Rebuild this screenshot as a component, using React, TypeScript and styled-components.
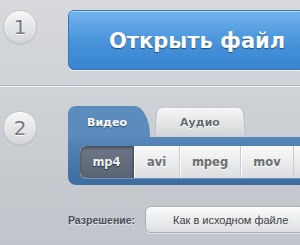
import React, { useState } from "react";
import styled, { createGlobalStyle, css } from "styled-components";

const GlobalStyle = createGlobalStyle`
  html, body {
    margin: 0;
    padding: 0;
  }
  body {
    width: 300px;
    height: 245px;
    overflow: hidden;
    background: linear-gradient(#d7d9dc, #c0c5cb);
    font-family: "DejaVu Sans", Verdana, sans-serif;
  }
`;

const Page = styled.div`
  display: flex;
  flex-direction: column;
`;

const Step = styled.section<{ $top: number; $height?: number }>`
  display: flex;
  align-items: flex-start;
  padding-top: ${(p) => p.$top}px;
  ${(p) =>
    p.$height &&
    css`
      height: ${p.$height}px;
      box-sizing: border-box;
    `}
`;

const Separator = styled.hr`
  margin: 0;
  border: none;
  height: 1px;
  background: #b6babe;
  border-bottom: 1px solid #eef0f1;
`;

const NumberColumn = styled.div<{ $offset: number }>`
  width: 68px;
  flex-shrink: 0;
  padding-top: ${(p) => p.$offset}px;
  padding-left: 3px;
  box-sizing: border-box;
`;

const Circle = styled.div`
  width: 34px;
  height: 34px;
  border-radius: 50%;
  box-sizing: border-box;
  border: 1px solid #c3c6c9;
  background: linear-gradient(#f6f6f6, #d3d5d8);
  box-shadow: inset 0 1px 0 #fff, 0 1px 1px rgba(0, 0, 0, 0.08);
  display: flex;
  align-items: center;
  justify-content: center;
  font-size: 20px;
  color: #777a7e;
  text-shadow: 0 1px 0 #fff;
`;

const Content = styled.div`
  flex: 1;
  display: flex;
  flex-direction: column;
`;

const OpenButton = styled.button`
  width: 262px;
  height: 60px;
  border-radius: 6px;
  border: 1px solid #3876bb;
  background: linear-gradient(#74b4ec 0%, #5aa1e3 30%, #4590d9 60%, #3a85d0 100%);
  box-shadow: inset 0 1px 0 rgba(255, 255, 255, 0.45), 0 1px 0 rgba(255, 255, 255, 0.7);
  color: #fff;
  font-family: "DejaVu Sans", Verdana, sans-serif;
  font-weight: bold;
  font-size: 21px;
  text-align: left;
  padding: 2px 0 0 40px;
  text-shadow: 0 1px 1px rgba(0, 0, 0, 0.45);
  cursor: pointer;
`;

const Panel = styled.div`
  width: 240px;
  display: flex;
  flex-direction: column;
`;

const Tabs = styled.div`
  display: flex;
  align-items: flex-end;
  height: 31px;
`;

const Tab = styled.div<{ $active?: boolean }>`
  position: relative;
  height: ${(p) => (p.$active ? 31 : 32)}px;
  display: flex;
  align-items: center;
  justify-content: center;
  padding-top: 2px;
  box-sizing: border-box;
  font-size: 11px;
  font-weight: bold;
  cursor: pointer;
  z-index: 0;
  ${(p) =>
    p.$active
      ? css`
          width: 82px;
          padding-right: 4px;
          color: #fff;
          text-shadow: 0 1px 1px rgba(0, 0, 0, 0.5);
          background: #5b8cbd;
          border-radius: 8px 16px 0 0 / 8px 30px 0 0;
        `
      : css`
          width: 92px;
          margin-left: 4px;
          color: #66696d;
          text-shadow: 0 1px 0 #fff;
          &::before {
            content: "";
            position: absolute;
            inset: 0;
            z-index: -1;
            border-radius: 7px 7px 0 0;
            border: 1px solid #b9bdc1;
            border-bottom: none;
            background: linear-gradient(#f6f6f6, #d2d5d8);
            transform: perspective(40px) rotateX(4deg);
            transform-origin: bottom;
          }
        `}
`;

const PanelBody = styled.div`
  background: linear-gradient(#5787b8, #3d6d9f);
  border-radius: 0 0 0 8px;
  padding: 9px 0 7px 12px;
`;

const Formats = styled.div`
  display: flex;
  height: 32px;
  border-radius: 6px 0 0 6px;
  background: linear-gradient(#fafafa, #dcdde0);
  overflow: hidden;
  box-shadow: 0 1px 0 rgba(255, 255, 255, 0.25);
`;

const Format = styled.div<{ $width: number; $selected?: boolean }>`
  width: ${(p) => p.$width}px;
  flex-shrink: 0;
  display: flex;
  align-items: center;
  justify-content: center;
  font-size: 11.5px;
  font-weight: bold;
  border-right: 1px solid #c9cbce;
  box-shadow: inset 1px 0 0 #fff;
  cursor: pointer;
  ${(p) =>
    p.$selected
      ? css`
          color: #eef0f2;
          text-shadow: 0 1px 1px rgba(0, 0, 0, 0.6);
          background: linear-gradient(#6d7686, #5a6472);
          border-radius: 6px 0 0 6px;
          box-shadow: inset 0 2px 3px rgba(0, 0, 0, 0.35);
          border-right: 1px solid #4b5360;
        `
      : css`
          color: #6b6e72;
          text-shadow: 0 1px 0 #fff;
        `}
`;

const SettingRow = styled.div`
  display: flex;
  align-items: center;
  margin-top: 21px;
  gap: 10px;
`;

const Label = styled.label`
  width: 67px;
  text-align: right;
  font-family: "Liberation Sans", Arial, sans-serif;
  font-size: 10.5px;
  font-weight: bold;
  color: #4a4f57;
  text-shadow: 0 1px 0 rgba(255, 255, 255, 0.6);
`;

const Select = styled.button`
  width: 170px;
  height: 27px;
  border-radius: 6px;
  border: 1px solid #a9adb2;
  background: linear-gradient(#fbfbfb, #dcdee1);
  box-shadow: inset 0 1px 0 #fff, 0 1px 0 rgba(255, 255, 255, 0.5);
  text-align: left;
  padding: 0 0 0 27px;
  font-family: "Liberation Sans", Arial, sans-serif;
  font-size: 11px;
  color: #3d4146;
  cursor: pointer;
`;

const formats = [
  { name: "mp4", width: 53 },
  { name: "avi", width: 45 },
  { name: "mpeg", width: 60 },
  { name: "mov", width: 52 },
];

export default function App() {
  const [tab, setTab] = useState("video");
  const [format, setFormat] = useState("mp4");

  return (
    <Page>
      <GlobalStyle />
      <Step $top={10} $height={85}>
        <NumberColumn $offset={0}>
          <Circle>1</Circle>
        </NumberColumn>
        <Content>
          <OpenButton>Открыть файл</OpenButton>
        </Content>
      </Step>
      <Separator />
      <Step $top={19}>
        <NumberColumn $offset={5}>
          <Circle>2</Circle>
        </NumberColumn>
        <Content>
          <Panel>
            <Tabs>
              <Tab $active={tab === "video"} onClick={() => setTab("video")}>
                Видео
              </Tab>
              <Tab $active={tab === "audio"} onClick={() => setTab("audio")}>
                Аудио
              </Tab>
            </Tabs>
            <PanelBody>
              <Formats>
                {formats.map((f) => (
                  <Format
                    key={f.name}
                    $width={f.width}
                    $selected={format === f.name}
                    onClick={() => setFormat(f.name)}
                  >
                    {f.name}
                  </Format>
                ))}
              </Formats>
            </PanelBody>
          </Panel>
          <SettingRow>
            <Label>Разрешение:</Label>
            <Select>Как в исходном файле</Select>
          </SettingRow>
        </Content>
      </Step>
    </Page>
  );
}
